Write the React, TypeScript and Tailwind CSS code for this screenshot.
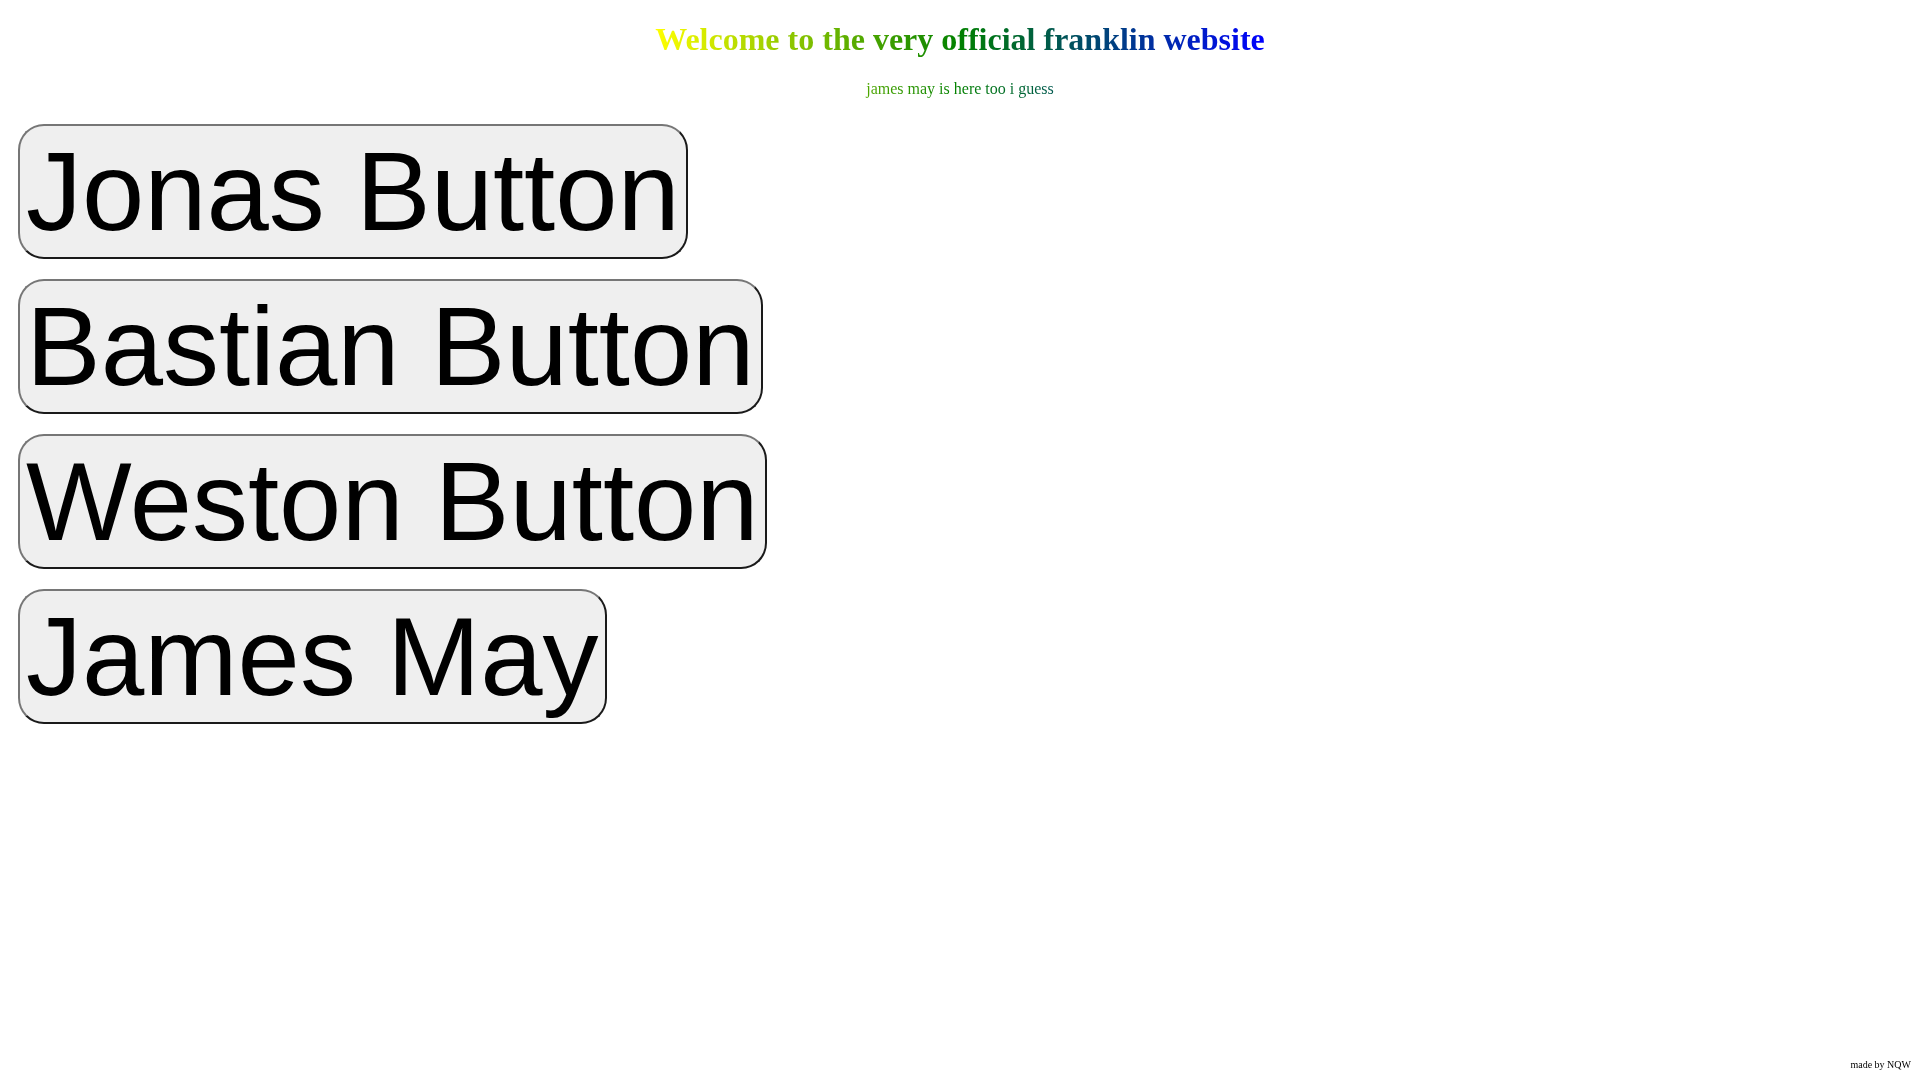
import React from 'react';

const BUTTONS = ['Jonas Button', 'Bastian Button', 'Weston Button', 'James May'];

export default function App() {
  return (
    <div className="min-h-screen bg-white text-black font-['Liberation_Serif',serif] leading-[normal] px-[8px] pb-[8px] pt-px">
      {/* Heading block, one gradient runs across both lines */}
      <div className="w-fit mx-auto text-center bg-[linear-gradient(to_right,#ffff00,#008000,#0000ff)] bg-clip-text text-transparent">
        <h1 className="mt-[20.44px] mb-[21.44px] text-[32px] font-bold leading-[normal]">
          Welcome to the very official franklin website
        </h1>
        <p className="my-[16px] text-[16px] leading-[normal]">james may is here too i guess</p>
      </div>

      {/* Big buttons */}
      <div className="flex flex-col items-start gap-[20px] ml-[10px] mt-[26px]">
        {BUTTONS.map(label => (
          <button
            key={label}
            className="font-['Liberation_Sans',Arial,sans-serif] text-[112px] leading-[normal] px-[6px] py-px bg-[#efefef] text-black rounded-[26px] border-2 border-t-[#767676] border-l-[#767676] border-b-[#1a1a1a] border-r-[#1a1a1a]"
          >
            {label}
          </button>
        ))}
      </div>

      {/* Footer credit */}
      <div className="fixed bottom-[10px] right-[9px] text-[10px] leading-[normal]">made by NQW</div>
    </div>
  );
}
